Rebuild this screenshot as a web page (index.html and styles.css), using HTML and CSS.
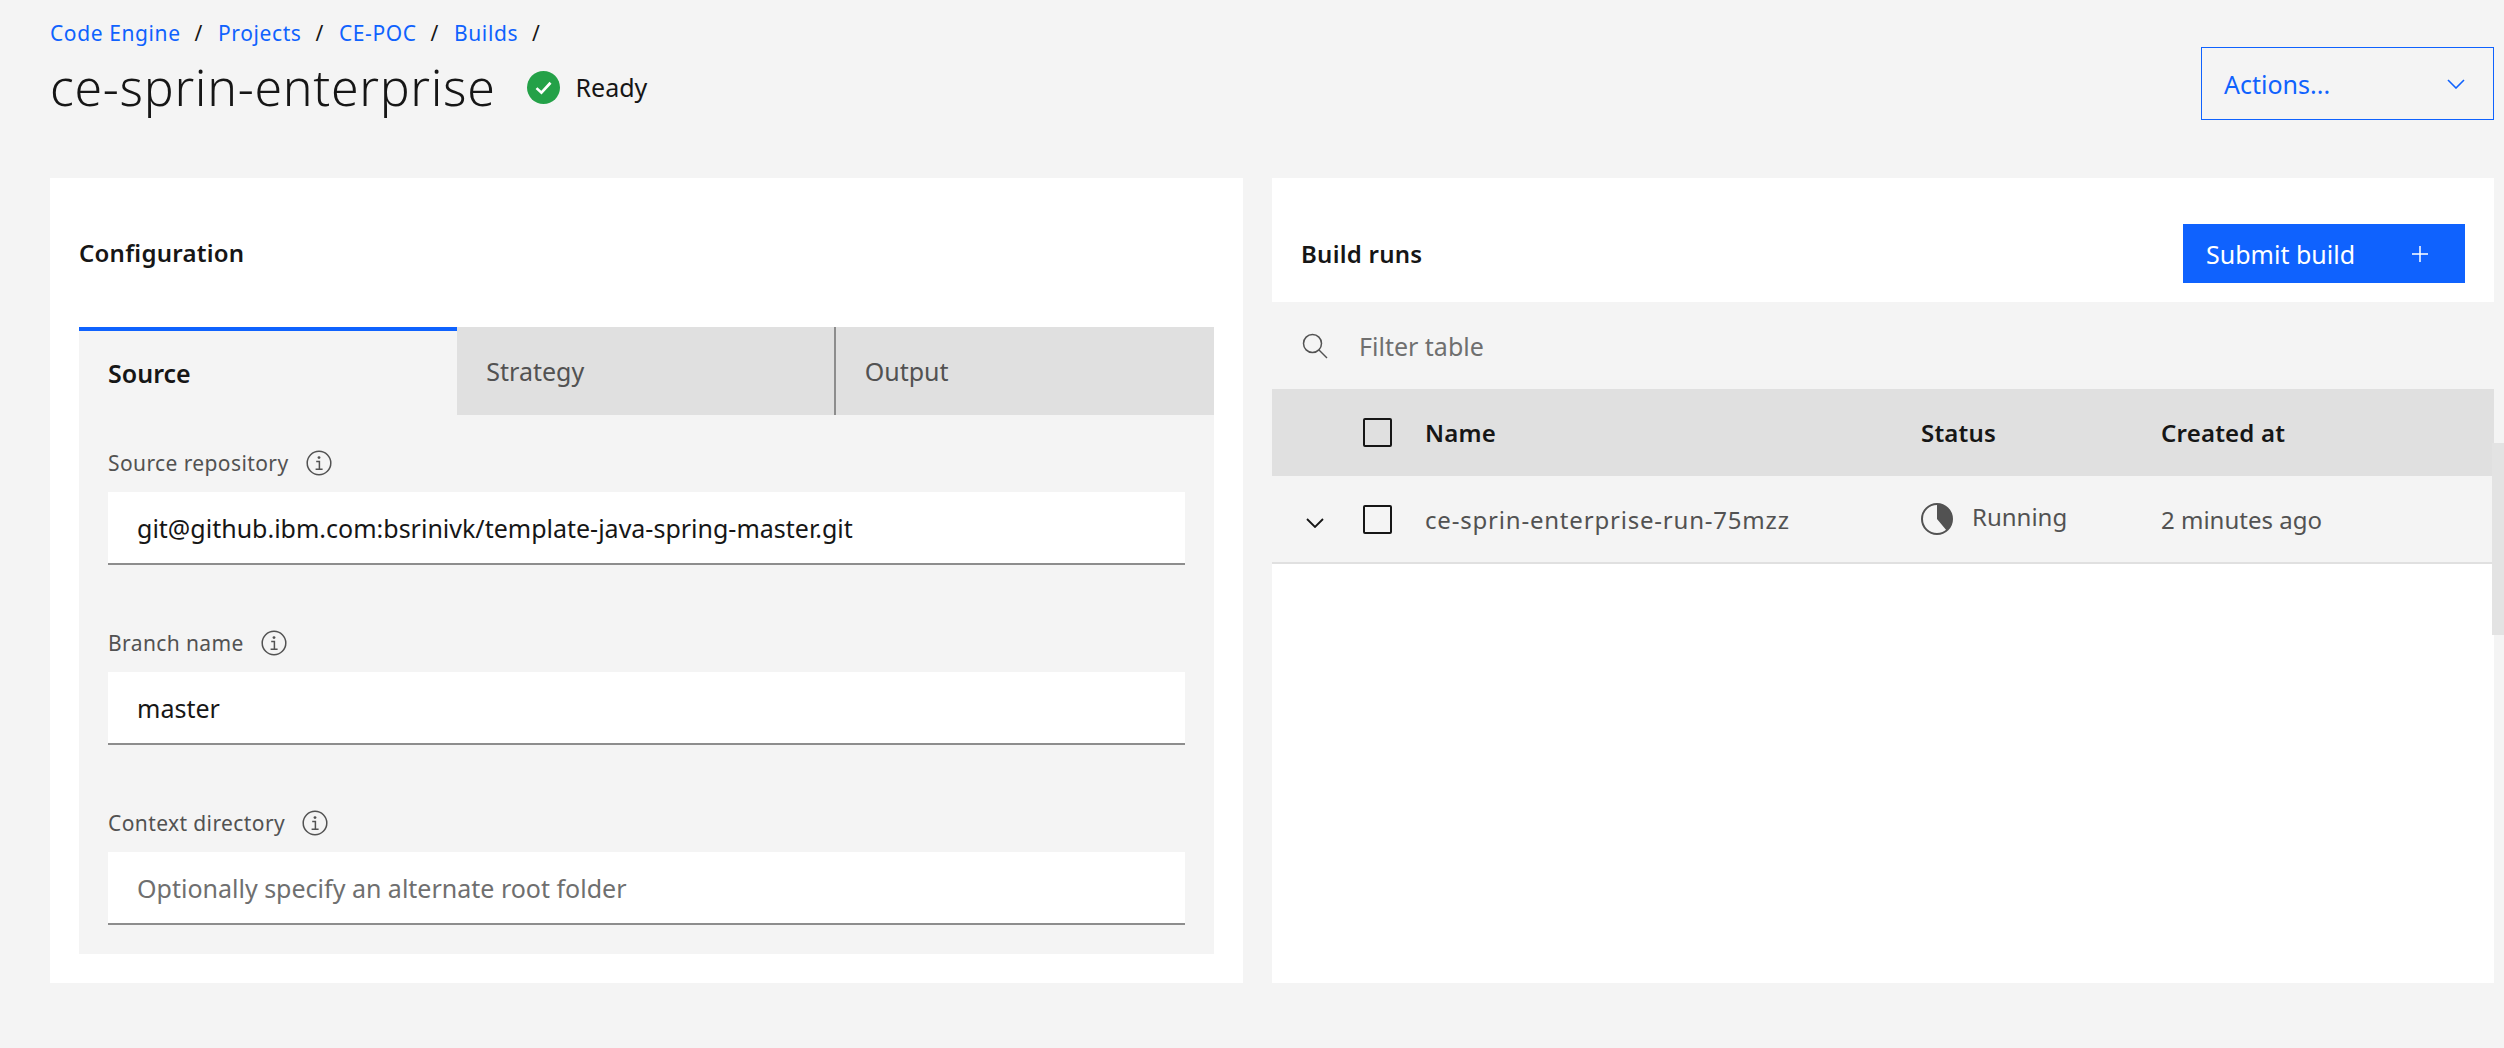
FILE: index.html
```html
<!DOCTYPE html>
<html lang="en">
<head>
    <meta charset="UTF-8">
    <meta name="viewport" content="width=device-width, initial-scale=1.0">
    <title>ce-sprin-enterprise</title>
    <link rel="stylesheet" href="styles.css">
</head>
<body>
    <header class="page-header">
        <div>
            <nav class="breadcrumb">
                <a href="#">Code Engine</a><span class="sep">/</span>
                <a href="#">Projects</a><span class="sep">/</span>
                <a href="#">CE-POC</a><span class="sep">/</span>
                <a href="#">Builds</a><span class="sep">/</span>
            </nav>
            <div class="title-row">
                <h1>ce-sprin-enterprise</h1>
                <svg class="ready-icon" viewBox="0 0 32 32">
                    <circle cx="16" cy="16" r="16" fill="#24a148"/>
                    <path d="M9.2 16.6l4.8 4.4 8.8-9.6" fill="none" stroke="#fff" stroke-width="2.6"/>
                </svg>
                <span class="ready-text">Ready</span>
            </div>
        </div>
        <button class="actions">
            Actions...
            <svg class="chevron" viewBox="0 0 18 10"><path d="M1 1l8 8 8-8" fill="none" stroke="#0f62fe" stroke-width="1.6"/></svg>
        </button>
    </header>

    <main class="panels">
        <section class="panel config">
            <h2 class="panel-title config-title">Configuration</h2>
            <div class="tabs">
                <div class="tab active">Source</div>
                <div class="tab">Strategy</div>
                <div class="tab divided">Output</div>
            </div>
            <div class="tab-body">
                <div class="field">
                    <div class="field-label">Source repository
                        <svg class="info" viewBox="0 0 26 26"><circle cx="13" cy="13" r="11.8" fill="none" stroke="#525252" stroke-width="1.5"/><circle cx="13" cy="7.6" r="1.4" fill="#525252"/><path d="M10.2 11.6h3.2v7.4M9.6 19.2h7" fill="none" stroke="#525252" stroke-width="1.5"/></svg>
                    </div>
                    <div class="input">git@github.ibm.com:bsrinivk/template-java-spring-master.git</div>
                </div>
                <div class="field">
                    <div class="field-label">Branch name
                        <svg class="info" viewBox="0 0 26 26"><circle cx="13" cy="13" r="11.8" fill="none" stroke="#525252" stroke-width="1.5"/><circle cx="13" cy="7.6" r="1.4" fill="#525252"/><path d="M10.2 11.6h3.2v7.4M9.6 19.2h7" fill="none" stroke="#525252" stroke-width="1.5"/></svg>
                    </div>
                    <div class="input">master</div>
                </div>
                <div class="field">
                    <div class="field-label">Context directory
                        <svg class="info" viewBox="0 0 26 26"><circle cx="13" cy="13" r="11.8" fill="none" stroke="#525252" stroke-width="1.5"/><circle cx="13" cy="7.6" r="1.4" fill="#525252"/><path d="M10.2 11.6h3.2v7.4M9.6 19.2h7" fill="none" stroke="#525252" stroke-width="1.5"/></svg>
                    </div>
                    <div class="input placeholder">Optionally specify an alternate root folder</div>
                </div>
            </div>
        </section>

        <section class="panel runs">
            <div class="runs-header">
                <h2 class="panel-title">Build runs</h2>
                <button class="submit">Submit build
                    <svg class="plus" viewBox="0 0 16 16"><path d="M8 0v16M0 8h16" fill="none" stroke="#fff" stroke-width="1.5"/></svg>
                </button>
            </div>
            <div class="filter">
                <svg class="search" viewBox="0 0 26 26"><circle cx="10.5" cy="10.5" r="9" fill="none" stroke="#525252" stroke-width="1.5"/><path d="M17 17l8 8" fill="none" stroke="#525252" stroke-width="1.5"/></svg>
                <span>Filter table</span>
            </div>
            <table>
                <colgroup>
                    <col class="col-expand"><col class="col-check"><col class="col-name"><col class="col-status"><col>
                </colgroup>
                <thead>
                    <tr>
                        <th></th>
                        <th><span class="checkbox"></span></th>
                        <th>Name</th>
                        <th>Status</th>
                        <th>Created at</th>
                    </tr>
                </thead>
                <tbody>
                    <tr>
                        <td class="expand"><svg class="row-chevron" viewBox="0 0 18 10"><path d="M1 1l8 8 8-8" fill="none" stroke="#161616" stroke-width="1.8"/></svg></td>
                        <td><span class="checkbox"></span></td>
                        <td class="run-name">ce-sprin-enterprise-run-75mzz</td>
                        <td>
                            <div class="status">
                                <svg class="status-icon" viewBox="0 0 32 32"><circle cx="16" cy="16" r="15" fill="none" stroke="#525252" stroke-width="2"/><path d="M16 1a15 15 0 0 1 9.6 26.5L16 16z" fill="#525252"/></svg>
                                <span class="status-text">Running</span>
                            </div>
                        </td>
                        <td>2 minutes ago</td>
                    </tr>
                </tbody>
            </table>
        </section>
    </main>

    <div class="scrollbar"></div>
</body>
</html>
```

FILE: styles.css
```css
* {
    box-sizing: border-box;
}
body {
    margin: 0;
    height: 1048px;
    overflow: hidden;
    position: relative;
    background-color: #f4f4f4;
    color: #161616;
    font-family: "Noto Sans", Roboto, Arial, sans-serif;
    padding: 0 10px 0 50px;
}
h1, h2 {
    margin: 0;
}
button {
    font-family: inherit;
    cursor: pointer;
}

/* header */
.page-header {
    display: flex;
    justify-content: space-between;
    align-items: flex-start;
    height: 178px;
}
.breadcrumb {
    display: flex;
    align-items: center;
    height: 26px;
    margin-top: 20px;
    font-size: 21px;
    letter-spacing: 0.6px;
}
.breadcrumb a {
    color: #0f62fe;
    text-decoration: none;
}
.sep {
    margin: 0 15px 0 14px;
}
.title-row {
    display: flex;
    align-items: center;
    height: 64px;
    margin-top: 9px;
}
h1 {
    font-size: 50px;
    font-weight: 300;
    letter-spacing: 0.7px;
}
.ready-icon {
    width: 33px;
    height: 33px;
    margin-left: 31px;
}
.ready-text {
    margin-left: 16px;
    font-size: 25px;
}
.actions {
    display: flex;
    justify-content: space-between;
    align-items: center;
    width: 293px;
    height: 73px;
    margin-top: 47px;
    padding: 0 28px 0 22px;
    background: none;
    border: 1px solid #0f62fe;
    color: #0f62fe;
    font-size: 25px;
}
.chevron {
    width: 18px;
    height: 10px;
}

/* panels */
.panels {
    display: grid;
    grid-template-columns: 1193px 1222px;
    gap: 29px;
    height: 805px;
}
.panel {
    background-color: white;
}
.panel-title {
    font-size: 24px;
    font-weight: 600;
    letter-spacing: 0.25px;
}
.config {
    padding: 0 29px 29px;
}
.config-title {
    display: flex;
    align-items: center;
    height: 149px;
}

/* tabs */
.tabs {
    display: grid;
    grid-template-columns: repeat(3, 1fr);
    height: 88px;
}
.tab {
    display: flex;
    align-items: center;
    padding-left: 29px;
    background-color: #e0e0e0;
    color: #525252;
    font-size: 25px;
}
.tab.active {
    background-color: #f4f4f4;
    border-top: 4px solid #0f62fe;
    color: #161616;
    font-weight: 600;
}
.tab.divided {
    border-left: 2px solid #8d8d8d;
    padding-left: 29px;
    margin-left: -2px;
}
.tab-body {
    height: 539px;
    padding: 33px 29px 0;
    background-color: #f4f4f4;
}

/* form fields */
.field {
    margin-bottom: 63px;
}
.field-label {
    display: flex;
    align-items: center;
    gap: 17px;
    height: 30px;
    margin-bottom: 14px;
    color: #525252;
    font-size: 21px;
    letter-spacing: 0.4px;
}
.info {
    width: 26px;
    height: 26px;
}
.input {
    display: flex;
    align-items: center;
    height: 73px;
    padding-left: 29px;
    background-color: white;
    border-bottom: 2px solid #8d8d8d;
    font-size: 25px;
}
.placeholder {
    color: #6f6f6f;
}

/* build runs */
.runs-header {
    display: flex;
    justify-content: space-between;
    align-items: center;
    height: 124px;
    padding: 46px 29px 19px;
}
.submit {
    display: flex;
    justify-content: space-between;
    align-items: center;
    flex-shrink: 0;
    width: 282px;
    height: 59px;
    padding: 0 37px 0 23px;
    background-color: #0f62fe;
    border: none;
    color: white;
    font-size: 25px;
}
.plus {
    width: 16px;
    height: 16px;
}
.filter {
    display: flex;
    align-items: center;
    height: 87px;
    padding-left: 30px;
    background-color: #f4f4f4;
    color: #6f6f6f;
    font-size: 25px;
}
.search {
    width: 26px;
    height: 26px;
    margin-right: 31px;
}
table {
    width: 100%;
    border-collapse: collapse;
    table-layout: fixed;
}
.col-expand {
    width: 91px;
}
.col-check {
    width: 62px;
}
.col-name {
    width: 496px;
}
.col-status {
    width: 240px;
}
th, td {
    padding: 0;
    height: 87px;
    text-align: left;
    font-size: 24px;
}
th {
    background-color: #e0e0e0;
    font-weight: 600;
    letter-spacing: 0.2px;
}
td {
    background-color: #f4f4f4;
    border-bottom: 2px solid #e0e0e0;
    color: #525252;
}
.run-name {
    letter-spacing: 0.8px;
}
.expand {
    padding-left: 34px;
}
.row-chevron {
    display: block;
    width: 18px;
    height: 10px;
    margin-top: 7px;
}
.checkbox {
    display: block;
    width: 29px;
    height: 29px;
    border: 2px solid #161616;
    border-radius: 2px;
}
.status {
    display: flex;
    align-items: center;
}
.status-icon {
    width: 32px;
    height: 32px;
}
.status-text {
    margin: -6px 0 0 19px;
}
.scrollbar {
    position: absolute;
    top: 443px;
    right: 0;
    width: 12px;
    height: 192px;
    background-color: #e3e3e3;
}
```
